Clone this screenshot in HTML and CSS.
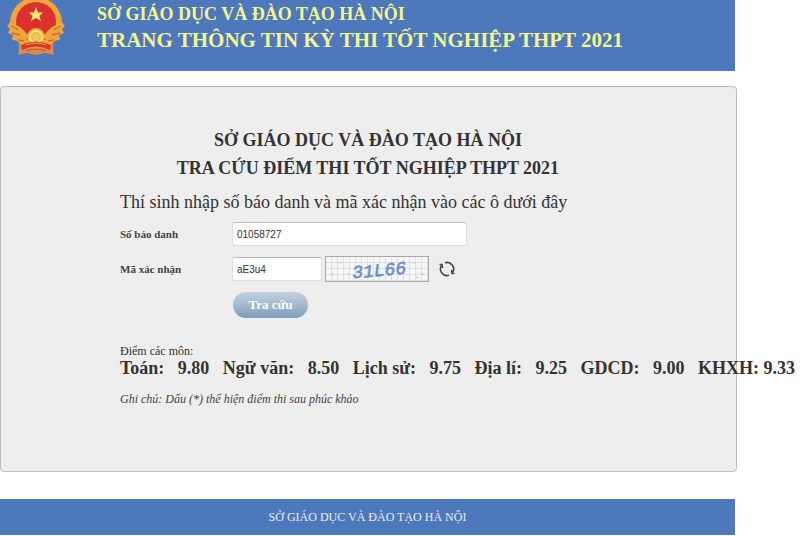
FILE: index.html
```html
<!DOCTYPE html>
<html lang="vi">
<head>
<meta charset="utf-8">
<meta name="viewport" content="width=device-width, initial-scale=1">
<title>Tra cứu điểm thi tốt nghiệp THPT 2021</title>
<link rel="stylesheet" href="styles.css">
</head>
<body>
<div class="page">
  <header class="banner">
    <svg class="emblem" viewBox="0 0 60 60" aria-hidden="true">
      <path d="M14 43 L12 57 L21 55 L30 57 L39 55 L48 57 L46 43 Z" fill="#d98a4c"/>
      <circle cx="30" cy="25" r="26" fill="#eda63c"/>
      <path d="M4 24 L1 28 L4 31 L2 35 L7 37 L6 42 L12 43 L15 49 H45 L48 43 L54 42 L53 37 L58 35 L56 31 L59 28 L56 24 Z" fill="#eda63c"/>
      <circle cx="30" cy="24" r="20" fill="#dc3030"/>
      <path d="M9 27 Q16 28 22 38 L18 46 L8 38 Z M51 27 Q44 28 38 38 L42 46 L52 38 Z" fill="#eda63c"/>
      <path d="M30 9 L32 14.500 H37 L33.500 18 L35 23 L30 20 L25 23 L26.500 18 L23 14.500 H28 Z" fill="#ffe766"/>
      <path d="M6 28 L12 32 M6 35 L14 37 M54 28 L48 32 M54 35 L46 37 M12 42 L18 43 M48 42 L42 43" stroke="#d9682f" stroke-width="1.500"/>
      <circle cx="30" cy="39" r="9" fill="#efb33b"/>
      <circle cx="30" cy="39" r="6" fill="none" stroke="#ffe27a" stroke-width="2"/>
      <circle cx="30" cy="39" r="3.500" fill="#e2ce69"/>
      <path d="M15 47 Q30 40 45 47 L44 52 Q30 45 16 52 Z" fill="#d8352d"/>
      <path d="M20 47 Q30 43 40 47" fill="none" stroke="#eda63c"/>
      <path d="M20 53 Q30 49 40 53" fill="none" stroke="#c4502d"/>
    </svg>
    <div class="banner-text">
      <p class="banner-org">SỞ GIÁO DỤC VÀ ĐÀO TẠO HÀ NỘI</p>
      <p class="banner-title">TRANG THÔNG TIN KỲ THI TỐT NGHIỆP THPT 2021</p>
    </div>
  </header>

  <main class="card">
    <form class="lookup">
      <h1 class="heading">SỞ GIÁO DỤC VÀ ĐÀO TẠO HÀ NỘI<br>TRA CỨU ĐIỂM THI TỐT NGHIỆP THPT 2021</h1>
      <p class="intro">Thí sinh nhập số báo danh và mã xác nhận vào các ô dưới đây</p>
      <div class="fields">
        <label for="sbd">Số báo danh</label>
        <input id="sbd" class="field field-wide" type="text" value="01058727">
        <label for="code">Mã xác nhận</label>
        <div class="captcha-row">
          <input id="code" class="field field-code" type="text" value="aE3u4">
          <svg class="captcha" viewBox="0 0 104 26" role="img" aria-label="Mã xác nhận">
            <defs>
              <pattern id="grid" width="6" height="6" patternUnits="userSpaceOnUse">
                <path d="M0 0 H6 M0 0 V6" stroke="#cfc8cb" fill="none"/>
              </pattern>
            </defs>
            <rect width="104" height="26" fill="#f6f6f7"/>
            <rect width="104" height="26" fill="url(#grid)"/>
            <path d="M6 17 l3 2 M14 6 l2 1 M22 19 l2 -2 M88 6 l2 2 M96 17 l3 2 M91 21 l2 1" stroke="#c6bec4"/>
            <text class="captcha-text" x="27" y="20" transform="rotate(-5 54 13)">31L66</text>
            <rect x="0.500" y="0.500" width="103" height="25" fill="none" stroke="#a6a8ab"/>
          </svg>
          <button class="refresh" type="button" aria-label="Đổi mã">
            <svg viewBox="0 0 18 18" fill="none" stroke="#454545" stroke-width="1.600">
              <path d="M7 2.800 A6.500 6.500 0 0 1 14.500 12.500 M11 15.200 A6.500 6.500 0 0 1 3.500 5.500"/>
              <path d="M1.500 4.500 L4 4.500 L4.500 8 M16.500 13.500 L14 13.500 L13.500 10"/>
            </svg>
          </button>
        </div>
        <button class="submit" type="submit">Tra cứu</button>
      </div>
    </form>
    <section class="results">
      <p class="results-label">Điểm các môn:</p>
      <p class="scores">Toán: &nbsp; 9.80 &nbsp; Ngữ văn: &nbsp; 8.50 &nbsp; Lịch sử: &nbsp; 9.75 &nbsp; Địa lí: &nbsp; 9.25 &nbsp; GDCD: &nbsp; 9.00 &nbsp; KHXH: 9.33</p>
      <p class="note">Ghi chú: Dấu (*) thể hiện điểm thi sau phúc khảo</p>
    </section>
  </main>

  <footer class="footer">SỞ GIÁO DỤC VÀ ĐÀO TẠO HÀ NỘI</footer>
</div>
</body>
</html>
```
FILE: styles.css
```css
* { box-sizing: border-box; }

body {
  margin: 0;
  background: #fff;
  color: #333;
  font-family: "Liberation Serif", "Times New Roman", serif;
  overflow-x: hidden;
}

p, h1 { margin: 0; }

.page { margin-right: 65px; }

.banner {
  display: flex;
  height: 71px;
  padding-left: 6px;
  background: #4d78bc;
  color: #f4f58c;
  font-weight: bold;
  overflow: hidden;
}

.emblem {
  flex: none;
  width: 60px;
  height: 60px;
  margin-top: -2px;
}

.banner-text { padding: 2px 0 0 31px; }

.banner-org {
  font-size: 18px;
  line-height: 24px;
}

.banner-title {
  font-size: 21px;
  line-height: 28px;
}

.card {
  margin: 15px -2px 27px 0;
  padding: 39px 16px 64px 119px;
  border: 1px solid #bdbdbd;
  border-radius: 4px;
  background: #eee;
}

.lookup { max-width: 496px; }

.heading {
  font-size: 18px;
  line-height: 28px;
  text-align: center;
}

.intro {
  padding: 6px 0;
  font-size: 18px;
  line-height: 28px;
}

.fields {
  display: grid;
  grid-template-columns: 112px 1fr;
  row-gap: 10px;
  align-items: center;
  justify-items: start;
}

.fields label {
  color: #444;
  font-size: 11px;
  font-weight: bold;
}

.field {
  height: 24px;
  padding: 0 4px;
  border: 1px solid #ddd;
  border-top-color: #bbb;
  border-radius: 3px;
  background: #fff;
  color: #333;
  font: 10px "Liberation Sans", Arial, sans-serif;
}

.field-wide { width: 235px; }

.field-code { width: 90px; }

.captcha-row {
  display: flex;
  align-items: center;
}

.captcha {
  width: 104px;
  height: 26px;
  margin: 0 9px 0 3px;
}

.captcha-text {
  fill: #668fca;
  stroke: #668fca;
  stroke-width: 0.5px;
  font: italic 18px "Liberation Mono", monospace;
}

.refresh {
  width: 18px;
  height: 18px;
  padding: 0;
  border: 0;
  background: none;
}

.refresh svg { display: block; }

.submit {
  grid-column: 2;
  width: 75px;
  height: 26px;
  margin-left: 1px;
  padding: 0;
  border: 0;
  border-radius: 13px;
  background: linear-gradient(#c4d2df, #a3b9ce 50%, #7c9cbb);
  color: #fff;
  font: bold 13px "Liberation Serif", "Times New Roman", serif;
}

.results { padding-top: 25px; }

.results-label {
  font-size: 12px;
  line-height: 16px;
}

.scores {
  font-size: 18px;
  font-weight: bold;
  line-height: 18px;
  white-space: nowrap;
}

.note {
  padding-top: 14px;
  color: #444;
  font-size: 12px;
  font-style: italic;
  line-height: 16px;
}

.footer {
  margin-bottom: 1px;
  background: #4d78bc;
  color: #e8eff8;
  font-size: 12px;
  line-height: 36px;
  text-align: center;
}
```
